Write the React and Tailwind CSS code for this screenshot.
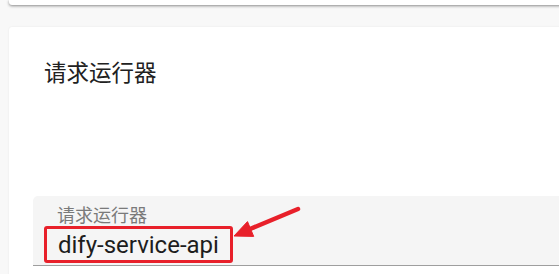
export default function App() {
  return (
    <div className="w-[559px] h-[274px] overflow-hidden bg-[#f8f8f8] font-['Roboto','Noto_Sans_CJK_SC',sans-serif]">
      {/* card above, only its bottom edge shows */}
      <div className="ml-[9px] w-[600px] h-[5px] bg-white rounded-bl-[3px] shadow-[0_1px_3px_rgba(0,0,0,0.45)]" />

      <div className="ml-[9px] mt-[22px] w-[600px] h-[260px] bg-white rounded-tl-[3px] shadow-[0_0_2px_rgba(0,0,0,0.08)]">
        <div className="pl-[35px] pt-[31px] text-[22.5px] leading-[30px] text-[#212121]">请求运行器</div>

        <div className="relative mt-[108px] ml-[24px] h-[70px] bg-[#f5f5f5] rounded-tl-[5px] border-b border-[#9e9e9e]">
          <div className="pl-[24px] pt-[10px] text-[18px] leading-[20px] text-[#7a7a7a]">请求运行器</div>
          <div className="ml-[11px] inline-flex items-center h-[37px] px-[11px] border-[3px] border-[#e8202a] rounded-[3px] text-[24px] leading-[28px] text-[#1d1d1d]">
            dify-service-api
          </div>
          <svg className="absolute left-[190px] top-[5px]" width="80" height="50" viewBox="0 0 80 50" fill="none">
            <path d="M75 8 L27 28" stroke="#e8202a" strokeWidth="4.5" strokeLinecap="round" />
            <path d="M11 35 L24.5 20.6 L30.7 35.4 Z" fill="#e8202a" stroke="#e8202a" strokeWidth="1" strokeLinejoin="round" />
          </svg>
        </div>
      </div>
    </div>
  )
}
